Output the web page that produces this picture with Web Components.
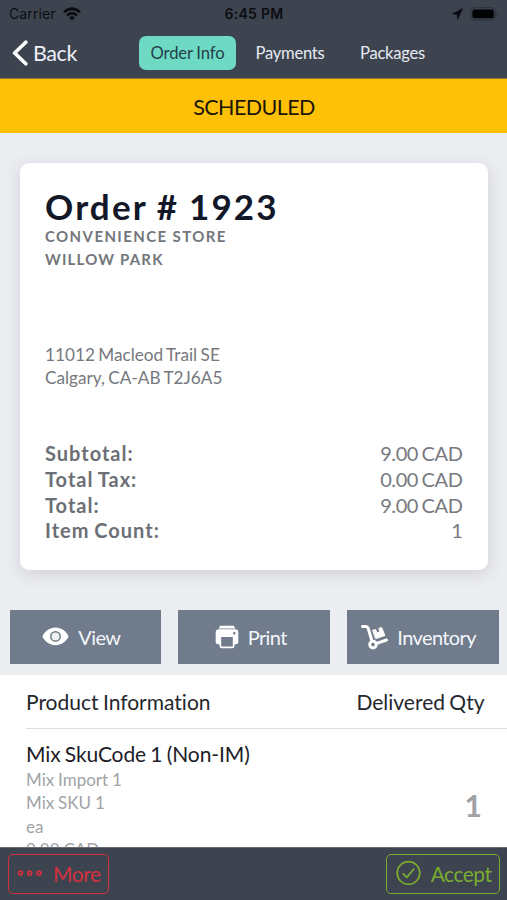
<!DOCTYPE html>
<html lang="en">
<head>
<meta charset="utf-8">
<title>Order Info</title>
<style>
html,body{margin:0;height:100%}
body{font-family:Lato,"Open Sans",sans-serif;background:#ecedf1;overflow:hidden}
</style>
</head>
<body>
<order-screen></order-screen>
<script>
function define(name, html) {
  const t = document.createElement('template');
  t.innerHTML = html;
  customElements.define(name, class extends HTMLElement {
    constructor() {
      super();
      this.attachShadow({mode: 'open'}).append(t.content.cloneNode(true));
    }
  });
}

// One line of text: size, weight, tracking and colour come from custom properties.
define('text-line', `<style>
:host{display:block;white-space:nowrap;font-variant-ligatures:none;font-size:var(--size,20px);font-weight:var(--weight,400);letter-spacing:var(--track,0);word-spacing:var(--word,0);line-height:var(--line,24px);color:var(--ink,inherit)}
</style><slot></slot>`);

define('status-bar', `<style>
:host{display:grid;grid-template-columns:1fr auto 1fr;align-items:center;height:27px;padding:0 8px 0 9px;box-sizing:border-box;color:#0b0d12;font:14px Inter,"Liberation Sans",sans-serif}
.l,.r{display:flex;align-items:center}.r{justify-content:flex-end;gap:7px}.l{gap:7px}
text-line{--size:14px;--line:20px}
.t{--weight:600;--track:.25px}
svg{display:block}
</style>
<div class="l"><text-line style="--track:.1px">Carrier</text-line><svg width="18" height="14" viewBox="0 0 18 14" fill="none" stroke="#0b0d12" stroke-width="2.8"><path d="M1 5.200Q9-1.800 17 5.200M4 8.500Q9 4 14 8.500"/><path d="M6.200 10.500Q9 8.200 11.800 10.500L9 13.500Z" fill="#0b0d12" stroke="none"/></svg></div>
<text-line class="t">6:45 PM</text-line>
<div class="r"><svg width="11" height="12" viewBox="0 0 11 12"><path d="M10.8.6.2 5.8l4.9.7.5 5Z" fill="#0b0d12" stroke="#0b0d12" stroke-width=".5" stroke-linejoin="round"/></svg><svg width="29" height="14" viewBox="0 0 29 14"><rect x=".7" y=".7" width="24.6" height="12.2" rx="3.6" fill="none" stroke="#2b303a" stroke-width="1"/><rect x="2.4" y="2.4" width="21.4" height="8.8" rx="2" fill="#020305"/><path d="M26.6 4.7q2 2.1 0 4.2Z" fill="#2b303a"/></svg></div>`);

define('nav-tab', `<style>
:host{display:flex;align-items:center;justify-content:center;box-sizing:border-box;height:34px;border-radius:7px;color:#e6eaf2}
:host([active]){background:#6edac4;color:#24414b}
text-line{--size:16.600px;--track:-.25px}
:host([active]) text-line{--track:-.1px;--word:-.5px}
</style><text-line><slot></slot></text-line>`);

define('nav-bar', `<style>
:host{display:flex;align-items:center;height:51px;padding:0 0 0 12px;box-sizing:border-box}
.back{display:flex;align-items:center;gap:5px;width:127px;color:#eef1f8}
.back text-line{--size:21.5px;--line:26px;--track:-.4px}
nav{display:flex}
svg{display:block}
</style>
<div class="back"><svg width="16" height="26" viewBox="0 0 16 26" fill="none" stroke="#fff" stroke-width="3.6" stroke-linecap="round" stroke-linejoin="round"><path d="M13.8 2.2 2.6 13l11.2 10.8"/></svg><text-line>Back</text-line></div>
<nav><nav-tab active style="width:97px">Order Info</nav-tab><nav-tab style="width:108px">Payments</nav-tab><nav-tab style="width:97px">Packages</nav-tab></nav>`);

define('status-banner', `<style>
:host{display:flex;align-items:center;justify-content:center;height:55px;background:#ffc008;border-top:1px solid #8c7433;box-sizing:border-box;color:#1b1608;padding-left:1px;padding-top:1px}
text-line{--size:21.5px;--track:-.6px}
</style><text-line><slot></slot></text-line>`);

define('total-row', `<style>
:host{display:flex;justify-content:space-between;height:25.7px;align-items:center}
.k{--weight:700;--track:1px;--word:-1px;color:#6c6f75}.v{--track:-.4px;--word:-1.200px;color:#777a7f}
text-line{--size:20px;--line:25.7px}
</style><text-line class="k"><slot></slot></text-line><text-line class="v"><slot name="value"></slot></text-line>`);

define('order-card', `<style>
:host{display:block;box-sizing:border-box;margin:29.5px 19.5px 0 20px;height:407px;padding:23.500px 25px 0;background:#fff;border-radius:9px;box-shadow:0 4px 16px rgba(70,80,100,.17)}
.title{--size:35px;--weight:700;--track:2.150px;--word:-1px;--line:41px;--ink:#121827;margin-bottom:-2px}
.sub{--size:15px;--weight:700;--track:1.400px;--line:23px;--ink:#73767b}
.addr{--size:17.200px;--word:-1px;--track:0;--line:23.4px;--ink:#75787d}
.address{margin-top:71.500px}
.totals{margin-top:52px}
</style>
<text-line class="title">Order # 1923</text-line>
<text-line class="sub">CONVENIENCE STORE</text-line>
<text-line class="sub" style="--track:1.200px">WILLOW PARK</text-line>
<div class="address"><text-line class="addr">11012 Macleod Trail SE</text-line><text-line class="addr">Calgary, CA-AB T2J6A5</text-line></div>
<div class="totals">
<total-row>Subtotal:<span slot="value">9.00 CAD</span></total-row>
<total-row>Total Tax:<span slot="value">0.00 CAD</span></total-row>
<total-row>Total:<span slot="value">9.00 CAD</span></total-row>
<total-row>Item Count:<span slot="value">1</span></total-row></div>`);

define('action-button', `<style>
:host{display:flex;align-items:center;justify-content:center;gap:9px;height:54px;box-sizing:border-box;padding-right:8px;background:#707b8b;color:#f3f6fb}
text-line{--size:20px;--track:-.6px}
::slotted(svg){display:block}
</style><slot name="icon"></slot><text-line><slot></slot></text-line>`);

define('action-row', `<style>
:host{display:grid;grid-template-columns:repeat(3,1fr);gap:17px;padding:40px 8.5px 11px 9.5px}
</style>
<action-button style="padding-right:8px"><svg slot="icon" width="27" height="19" viewBox="0 0 27 19"><path d="M.4 9.5C3 4.2 7.5.6 13.5.6S24 4.2 26.6 9.5C24 14.8 19.500 18.200 13.5 18.200S3 14.8.4 9.500Z" fill="#fff"/><circle cx="13.500" cy="9.400" r="4.700" fill="#eef2f2" stroke="#6b7c80" stroke-width="1.500"/></svg>View</action-button>
<action-button style="padding-right:6.500px"><svg slot="icon" width="24" height="24" viewBox="0 0 24 24"><path d="M5.200.8H18.800L20.300 3.600H3.700Z" fill="#fff"/><path d="M4 4.200H20Q23.300 4.200 23.300 7.500V17.200Q23.300 19.300 21 19.300H19.500V21Q19.500 23.200 17.300 23.200H6.700Q4.500 23.200 4.500 21V19.300H3Q.7 19.300.7 17.200V7.500Q.7 4.200 4 4.200Z" fill="#fff"/><rect x="6.200" y="12" width="11.600" height="9.500" fill="#707b8b"/><circle cx="19.300" cy="8.200" r="1.200" fill="#707b8b"/></svg>Print</action-button>
<action-button><svg slot="icon" width="27" height="26" viewBox="0 0 27 26" fill="none" stroke="#fff" stroke-linecap="round" stroke-linejoin="round"><path d="M1.500 2.500H4.500Q6.500 2.500 7.200 4.500L11 17.300" stroke-width="3"/><circle cx="12" cy="20.600" r="3.300" stroke-width="3"/><path d="M15.700 19.400 25.500 16" stroke-width="3"/><path d="M12 6.200 14.600 5.500 16 9.100 18.700 8 17.900 4.400 20.600 3.500 23.900 11.500 14.900 14.600Z" fill="#fff" stroke-width="1"/></svg>Inventory</action-button>`);

define('product-list', `<style>
:host{display:block;flex:1;min-height:0;overflow:hidden;background:#fff;padding-left:26px;color:#24272c}
.head{display:flex;justify-content:space-between;align-items:center;height:54px;padding:1px 22.5px 0 0;box-sizing:border-box;border-bottom:1px solid #dcdde0}
.head text-line{--size:21px;--track:0;--word:-1px}
.item{display:flex;justify-content:space-between;padding:12.500px 25px 0 0}
.name{--size:21px;--track:-.1px;--word:-1px;--line:26px;--ink:#1d2026}
.meta{--size:17px;--word:-.5px;--line:23.3px;--ink:#a2a3a6}
.qty{--size:30px;--weight:700;--line:36px;--ink:#a0a1a4;margin-top:45.500px}
</style>
<div class="head"><text-line>Product Information</text-line><text-line>Delivered Qty</text-line></div>
<div class="item"><div><text-line class="name">Mix SkuCode 1 (Non-IM)</text-line><text-line class="meta" style="margin-top:1px">Mix Import 1</text-line><text-line class="meta">Mix SKU 1</text-line><text-line class="meta">ea</text-line><text-line class="meta">9.00 CAD</text-line></div><text-line class="qty">1</text-line></div>`);

define('outline-button', `<style>
:host{display:flex;align-items:center;box-sizing:border-box;height:40px;border:1.5px solid currentColor;border-radius:5px;padding:1px 7.500px 0 8px;justify-content:space-between}
text-line{--size:21px;--track:-.5px}
::slotted(svg){display:block;margin-top:-2px}
</style><slot name="icon"></slot><text-line><slot></slot></text-line>`);

define('bottom-bar', `<style>
:host{display:flex;justify-content:space-between;box-sizing:border-box;height:53px;padding:5.500px 7px 0 8px;background:#3e444f;border-top:1px solid #666a73}
.more{color:#d1303f;width:101px}.accept{color:#7aac31;width:114px}
</style>
<outline-button class="more"><svg slot="icon" width="26" height="8" viewBox="0 0 26 8" fill="none" stroke="currentColor" stroke-width="1.900"><circle cx="3.500" cy="4" r="1.900"/><circle cx="12.700" cy="4" r="1.900"/><circle cx="22" cy="4" r="1.900"/></svg>More</outline-button>
<outline-button class="accept"><svg slot="icon" width="26" height="26" viewBox="0 0 26 26" fill="none" stroke="currentColor" stroke-width="1.700" stroke-linecap="round" stroke-linejoin="round"><circle cx="13.500" cy="13" r="11.300"/><path d="M8.200 13.800 11.800 17.400 18.800 9"/></svg>Accept</outline-button>`);

define('order-screen', `<style>
:host{display:flex;flex-direction:column;width:507px;height:900px;background:#ecedf1;overflow:hidden}
header{background:#3e444f}
</style>
<header><status-bar></status-bar><nav-bar></nav-bar></header>
<status-banner>SCHEDULED</status-banner>
<order-card></order-card>
<action-row></action-row>
<product-list></product-list>
<bottom-bar></bottom-bar>`);
</script>
</body>
</html>
